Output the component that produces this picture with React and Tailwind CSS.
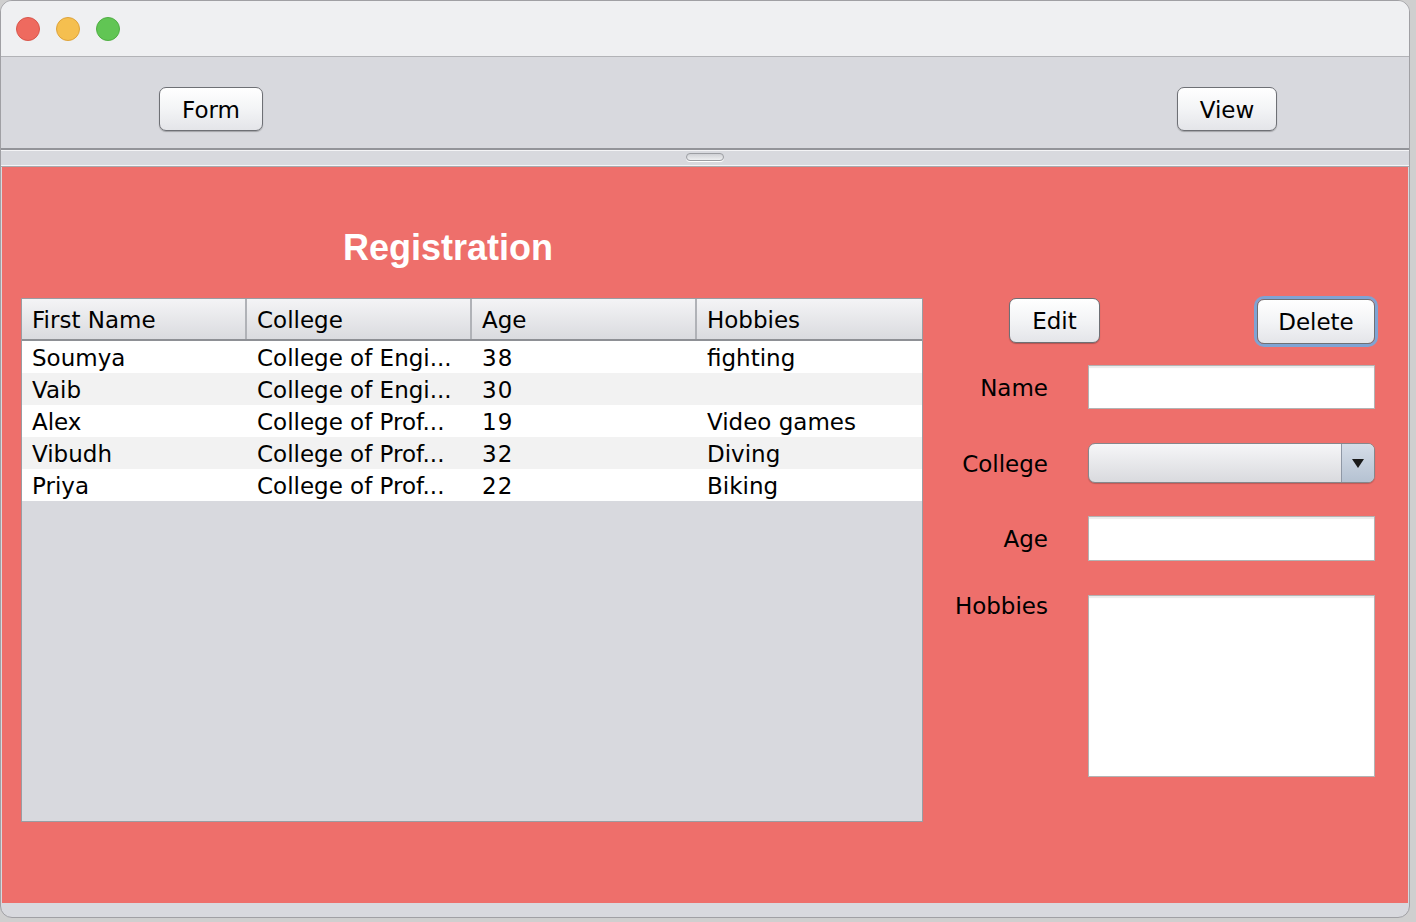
import React from "react";

const rows = [
  { name: "Soumya", college: "College of Engi...", age: "38", hobbies: "fighting" },
  { name: "Vaib", college: "College of Engi...", age: "30", hobbies: "" },
  { name: "Alex", college: "College of Prof...", age: "19", hobbies: "Video games" },
  { name: "Vibudh", college: "College of Prof...", age: "32", hobbies: "Diving" },
  { name: "Priya", college: "College of Prof...", age: "22", hobbies: "Biking" },
];

const font = { fontFamily: '"DejaVu Sans", "Liberation Sans", sans-serif' };

function AquaButton({ children, className = "", focused = false }) {
  return (
    <div
      className={
        "flex items-center justify-center rounded-[7px] border border-[#6e7075] bg-gradient-to-b from-[#ffffff] via-[#f3f4f6] to-[#e4e5e9] text-[23px] text-black shadow-[0_1px_1px_rgba(0,0,0,0.25)] " +
        (focused ? "ring-[3px] ring-[#7fa3d3] " : "") +
        className
      }
    >
      {children}
    </div>
  );
}

function TextBox({ className = "" }) {
  return (
    <div
      className={
        "border border-[#b3b3b3] bg-white shadow-[inset_0_2px_1px_rgba(0,0,0,0.08)] " + className
      }
    />
  );
}

export default function App() {
  return (
    <div className="w-[1416px] h-[922px] bg-[#cfcfcf] overflow-hidden" style={font}>
      <div className="w-[1410px] h-[918px] rounded-[12px] border border-[#a0a0a4] bg-[#d8d9de] flex flex-col overflow-hidden">
        {/* title bar */}
        <div className="h-[56px] shrink-0 bg-[#eff0f2] border-b border-[#b2b3b7] flex items-center pl-[15px] gap-[16px]">
          <span className="w-[24px] h-[24px] rounded-full bg-[#ee6a5f] border border-[#d9564b]" />
          <span className="w-[24px] h-[24px] rounded-full bg-[#f5bf4f] border border-[#dea33a]" />
          <span className="w-[24px] h-[24px] rounded-full bg-[#61c554] border border-[#4fae43]" />
        </div>

        {/* toolbar */}
        <div className="h-[91px] shrink-0 flex items-start justify-between pt-[30px] pl-[158px] pr-[132px]">
          <AquaButton className="w-[104px] h-[44px] pt-[2px]">Form</AquaButton>
          <AquaButton className="w-[100px] h-[44px] pt-[2px]">View</AquaButton>
        </div>

        {/* split divider */}
        <div className="h-[19px] shrink-0 border-t-2 border-[#939499] flex flex-col">
          <div className="h-px bg-[#f4f4f6]" />
          <div className="flex-1 flex justify-center pt-[2px]">
            <div className="w-[38px] h-[8px] rounded-full border border-[#9c9ea3] bg-gradient-to-b from-[#d0d1d5] to-[#eeeff1] shadow-[0_1px_0_#ffffff]" />
          </div>
          <div className="h-px bg-[#f4f4f6]" />
          <div className="h-px bg-[#a9aaae]" />
        </div>

        {/* content */}
        <div className="h-[736px] shrink-0 mx-px bg-[#ee6f6b] flex flex-col">
          <div
            className="mt-[60px] ml-[341px] h-[41px] flex items-center text-white font-bold text-[36px]"
            style={{ fontFamily: '"Liberation Sans", Arial, sans-serif' }}
          >
            Registration
          </div>

          <div className="mt-[30px] flex">
            {/* table */}
            <div className="ml-[19px] w-[902px] h-[524px] border border-[#9a9ca2] bg-[#d8d9de] flex flex-col">
              <div className="h-[42px] grid grid-cols-4 bg-gradient-to-b from-[#f4f4f6] to-[#dadbdf] border-b-2 border-[#8e9095] text-[23px]">
                {["First Name", "College", "Age", "Hobbies"].map((h, i) => (
                  <div
                    key={h}
                    className={
                      "flex items-center pl-[10px] pt-[2px] " + (i < 3 ? "border-r-2 border-[#b0b2b7]" : "")
                    }
                  >
                    {h}
                  </div>
                ))}
              </div>
              {rows.map((r, i) => (
                <div
                  key={r.name}
                  className={
                    "h-[32px] grid grid-cols-4 text-[23px] pt-[2px] leading-[30px] " +
                    (i % 2 === 0 ? "bg-white" : "bg-[#f2f2f2]")
                  }
                >
                  <div className="pl-[10px]">{r.name}</div>
                  <div className="pl-[10px]">{r.college}</div>
                  <div className="pl-[10px] tracking-[1px]">{r.age}</div>
                  <div className="pl-[10px]">{r.hobbies}</div>
                </div>
              ))}
            </div>

            {/* form */}
            <div className="flex-1 flex flex-col">
              <div className="flex items-start justify-between pl-[86px] pr-[33px]">
                <AquaButton className="w-[91px] h-[45px] pt-[2px]">Edit</AquaButton>
                <AquaButton focused className="w-[118px] h-[45px] mt-[1px] pt-[2px]">Delete</AquaButton>
              </div>

              <div className="mt-[21px] grid grid-cols-[125px_287px] gap-x-[40px] text-[23px]">
                <div className="h-[44px] pt-[2px] flex items-center justify-end">Name</div>
                <TextBox className="h-[44px]" />

                <div className="h-[40px] mt-[34px] pt-[2px] flex items-center justify-end">College</div>
                <div className="h-[40px] mt-[34px] rounded-[7px] border border-[#85878c] bg-gradient-to-b from-[#f6f6f8] to-[#d9dade] flex overflow-hidden shadow-[0_1px_1px_rgba(0,0,0,0.2)]">
                  <div className="flex-1" />
                  <div className="w-[33px] border-l border-[#8f98a6] bg-gradient-to-b from-[#d5dde8] to-[#b5c2d2] flex items-center justify-center">
                    <svg width="14" height="11" viewBox="0 0 14 11">
                      <path d="M1 1 L13 1 L7 10 Z" fill="#1a1a1a" />
                    </svg>
                  </div>
                </div>

                <div className="h-[45px] mt-[33px] pt-[2px] flex items-center justify-end">Age</div>
                <TextBox className="h-[45px] mt-[33px]" />

                <div className="mt-[34px] flex justify-end leading-[22px] h-[182px]">
                  <span>Hobbies</span>
                </div>
                <TextBox className="h-[182px] mt-[34px]" />
              </div>
            </div>
          </div>
        </div>
      </div>
    </div>
  );
}
